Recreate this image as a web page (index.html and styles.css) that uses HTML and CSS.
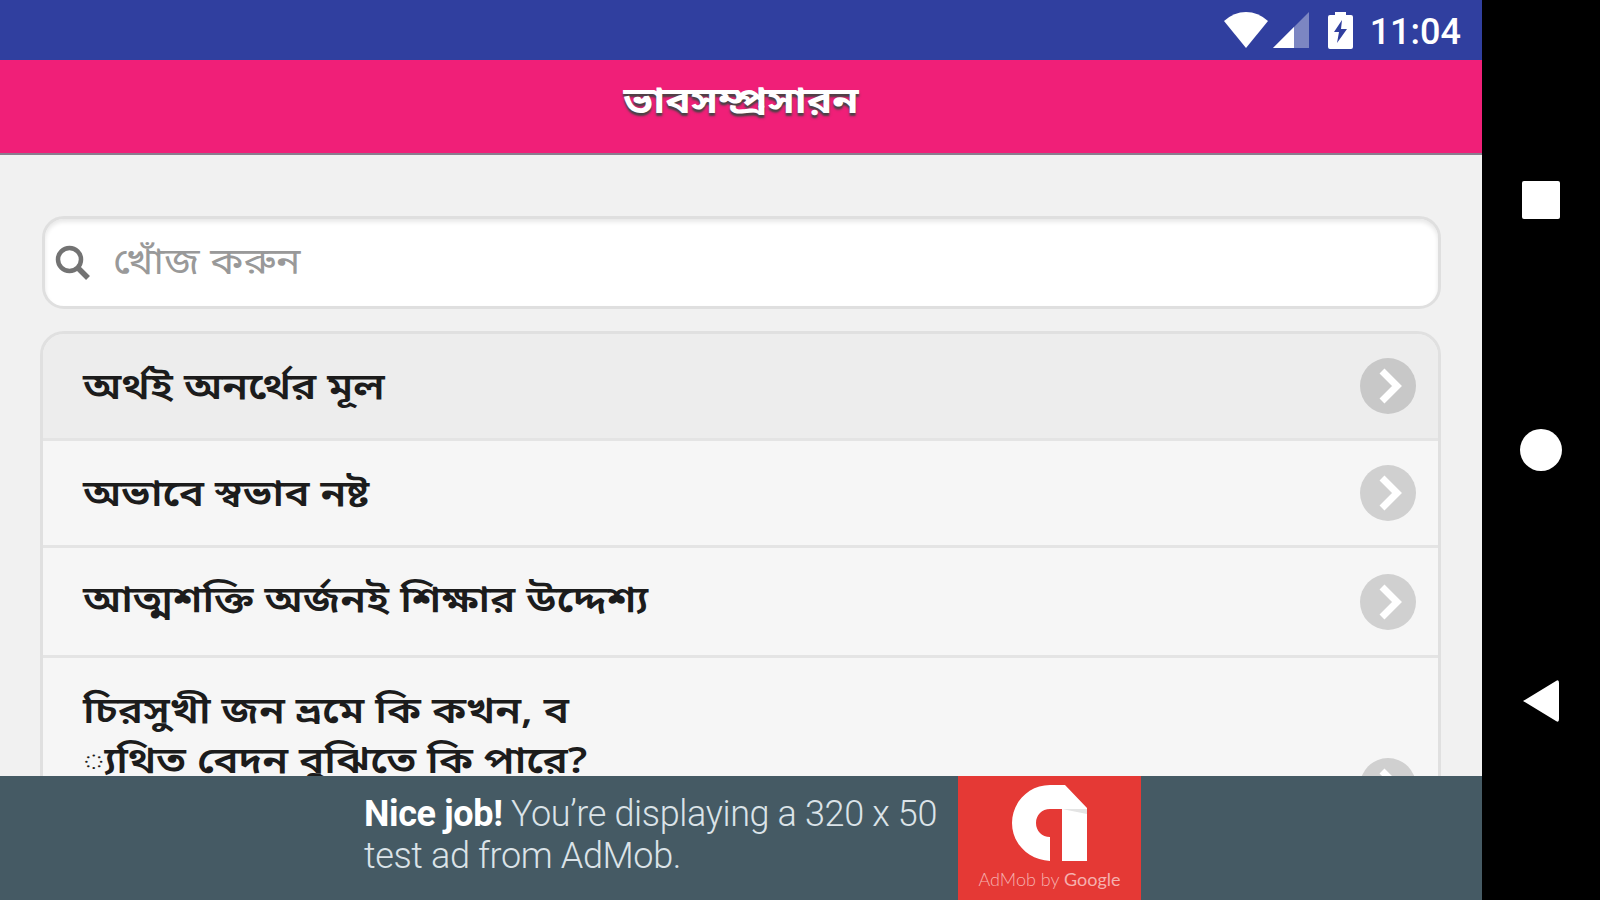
FILE: index.html
```html
<!DOCTYPE html>
<html lang="bn">
<head>
    <meta charset="UTF-8">
    <meta name="viewport" content="width=device-width, initial-scale=1.0">
    <title>ভাবসম্প্রসারন</title>
    <link rel="stylesheet" href="styles.css">
</head>
<body>
    <div class="screen">
        <div class="status-bar">
            <svg class="wifi" width="46" height="38" viewBox="0 0 46 38"><path d="M1 10Q11 1 23 1T45 10L23 37Z" fill="#fff"/></svg>
            <svg class="signal" width="36" height="36" viewBox="0 0 36 36"><path d="M36 0V36H0Z" fill="#7c86c2"/><path d="M21 15V36H0Z" fill="#fff"/></svg>
            <svg class="battery" width="25" height="38" viewBox="0 0 25 38"><path d="M2 4H7V1H18V4H23Q25 4 25 6V36Q25 38 23 38H2Q0 38 0 36V6Q0 4 2 4Z" fill="#fff"/><path d="M14 9L6 21H11L9 32L19 18H13Z" fill="#303f9f"/></svg>
            <span class="clock">11:04</span>
        </div>
        <div class="header">
            <h1>ভাবসম্প্রসারন</h1>
        </div>
        <div class="content">
            <div class="search">
                <svg width="36" height="36" viewBox="0 0 36 36" fill="none" stroke="#737373"><circle cx="14.5" cy="14.5" r="11.5" stroke-width="4.5"/><path d="M22.5 22.5L33 33" stroke-width="5.5"/></svg>
                <span class="placeholder">খোঁজ করুন</span>
            </div>
            <ul class="list">
                <li class="active">
                    <span class="label">অর্থই অনর্থের মূল</span>
                    <span class="arrow"><svg width="24" height="36" viewBox="0 0 24 36"><path d="M3 3L18 18L3 33" fill="none" stroke="#fff" stroke-width="7"/></svg></span>
                </li>
                <li>
                    <span class="label">অভাবে স্বভাব নষ্ট</span>
                    <span class="arrow"><svg width="24" height="36" viewBox="0 0 24 36"><path d="M3 3L18 18L3 33" fill="none" stroke="#fff" stroke-width="7"/></svg></span>
                </li>
                <li class="third">
                    <span class="label">আত্মশক্তি অর্জনই শিক্ষার উদ্দেশ্য</span>
                    <span class="arrow"><svg width="24" height="36" viewBox="0 0 24 36"><path d="M3 3L18 18L3 33" fill="none" stroke="#fff" stroke-width="7"/></svg></span>
                </li>
                <li class="tall">
                    <span class="label">চিরসুখী জন ভ্রমে কি কখন, ব<br>্যথিত বেদন বুঝিতে কি পারে?</span>
                    <span class="arrow"><svg width="24" height="36" viewBox="0 0 24 36"><path d="M3 3L18 18L3 33" fill="none" stroke="#fff" stroke-width="7"/></svg></span>
                </li>
            </ul>
        </div>
        <div class="ad">
            <p class="ad-text"><b>Nice job!</b> You’re displaying a 320 x 50<br>test ad from AdMob.</p>
            <div class="ad-logo">
                <svg width="75" height="76" viewBox="0 0 75 76"><path d="M38 76C17 75 0 59 0 38C0 17 17 0 38 0H53L75 23V76H50V24H38C30 24 24 30 24 38C24 46 30 52 38 52Z" fill="#fff"/><path d="M50 24H75V29Z" fill="#e4e4e4"/></svg>
                <span class="ad-by">AdMob by <b>Google</b></span>
            </div>
        </div>
    </div>
    <div class="nav-bar">
        <svg width="40" height="40" viewBox="0 0 40 40"><rect x="1" y="1" width="38" height="38" rx="2" fill="#fff"/></svg>
        <svg width="42" height="42" viewBox="0 0 42 42"><circle cx="21" cy="21" r="21" fill="#fff"/></svg>
        <svg width="38" height="44" viewBox="0 0 38 44"><path d="M1 22L34 2Q37 0 37 4V40Q37 44 34 42Z" fill="#fff"/></svg>
    </div>
</body>
</html>
```
FILE: styles.css
```css
* {
    box-sizing: border-box;
}

body {
    display: flex;
    width: 1600px;
    height: 900px;
    margin: 0;
    overflow: hidden;
    background-color: #000;
    font-family: "Noto Sans", "Noto Sans Bengali", sans-serif;
}

.screen {
    display: flex;
    flex-direction: column;
    width: 1482px;
    height: 900px;
    background-color: #f1f1f1;
}

.status-bar {
    display: flex;
    flex: none;
    align-items: center;
    justify-content: flex-end;
    height: 60px;
    padding-right: 21px;
    background-color: #303f9f;
    color: #fff;
}

.signal {
    margin-left: 4px;
}

.battery {
    margin-left: 19px;
}

.clock {
    margin: 3px 0 0 17px;
    font: 500 36px Roboto, sans-serif;
}

.header {
    flex: none;
    height: 95px;
    padding-top: 9px;
    border-bottom: 2px solid #8a7d8e;
    background-color: #f01f78;
    color: #fff;
    text-align: center;
}

h1 {
    margin: 0;
    font-size: 37px;
    line-height: 60px;
    text-shadow: 0 3px 2px #444;
    transform: scaleX(1.145);
}

.content {
    flex: 1;
    min-height: 0;
    padding: 61px 41px 0 40px;
    overflow: hidden;
}

.search {
    display: flex;
    align-items: center;
    height: 93px;
    margin: 0 0 22px 2px;
    padding-left: 10px;
    border: 3px solid #dfdfdf;
    border-radius: 22px;
    background-color: #fff;
    box-shadow: inset 0 3px 4px #e8e8e8;
}

.placeholder {
    margin: 0 0 3px 22px;
    color: #999;
    font-size: 36px;
    line-height: 50px;
    transform: scaleX(1.14);
    transform-origin: left;
}

.list {
    margin: 0;
    padding: 0;
    border: 3px solid #e0e0e0;
    border-radius: 24px 24px 0 0;
    list-style: none;
    overflow: hidden;
}

.list li {
    display: flex;
    align-items: center;
    justify-content: space-between;
    height: 107px;
    padding: 0 22px 0 40px;
    border-bottom: 3px solid #e4e4e4;
    background-color: #f6f6f6;
}

.list li.active {
    background-color: #ededed;
}

.list li.third {
    height: 110px;
}

.list li.tall {
    height: 250px;
    align-items: flex-start;
    padding-top: 27px;
}

.label {
    color: #1c1c1c;
    font-size: 36px;
    font-weight: 600;
    line-height: 50px;
    white-space: nowrap;
    transform: scaleX(1.17);
    transform-origin: left;
}

.third .label {
    margin-bottom: 5px;
}

.arrow {
    display: flex;
    flex: none;
    align-items: center;
    justify-content: center;
    width: 56px;
    height: 56px;
    padding-left: 6px;
    border-radius: 50%;
    background-color: #d0d0d0;
}

.active .arrow {
    background-color: #c8c8c8;
}

.tall .arrow {
    margin-top: 73px;
}

.ad {
    display: flex;
    flex: none;
    justify-content: flex-end;
    height: 124px;
    padding-right: 341px;
    background-color: #455a64;
}

.ad-text {
    width: 594px;
    margin: 17px 0 0;
    color: #dbe3e8;
    font: 300 36px/42px Roboto, sans-serif;
    letter-spacing: -0.36px;
    white-space: nowrap;
}

.ad-text b {
    color: #fff;
    font-weight: 700;
}

.ad-logo {
    display: flex;
    flex-direction: column;
    align-items: center;
    width: 183px;
    padding-top: 9px;
    background-color: #e53935;
}

.ad-by {
    margin-top: 6px;
    color: #f5b0ae;
    font: 300 18px/24px Lato, sans-serif;
    white-space: nowrap;
}

.ad-by b {
    font-weight: 400;
}

.nav-bar {
    display: flex;
    flex: 1;
    flex-direction: column;
    align-items: center;
    justify-content: space-between;
    padding: 180px 0 177px;
}
```
